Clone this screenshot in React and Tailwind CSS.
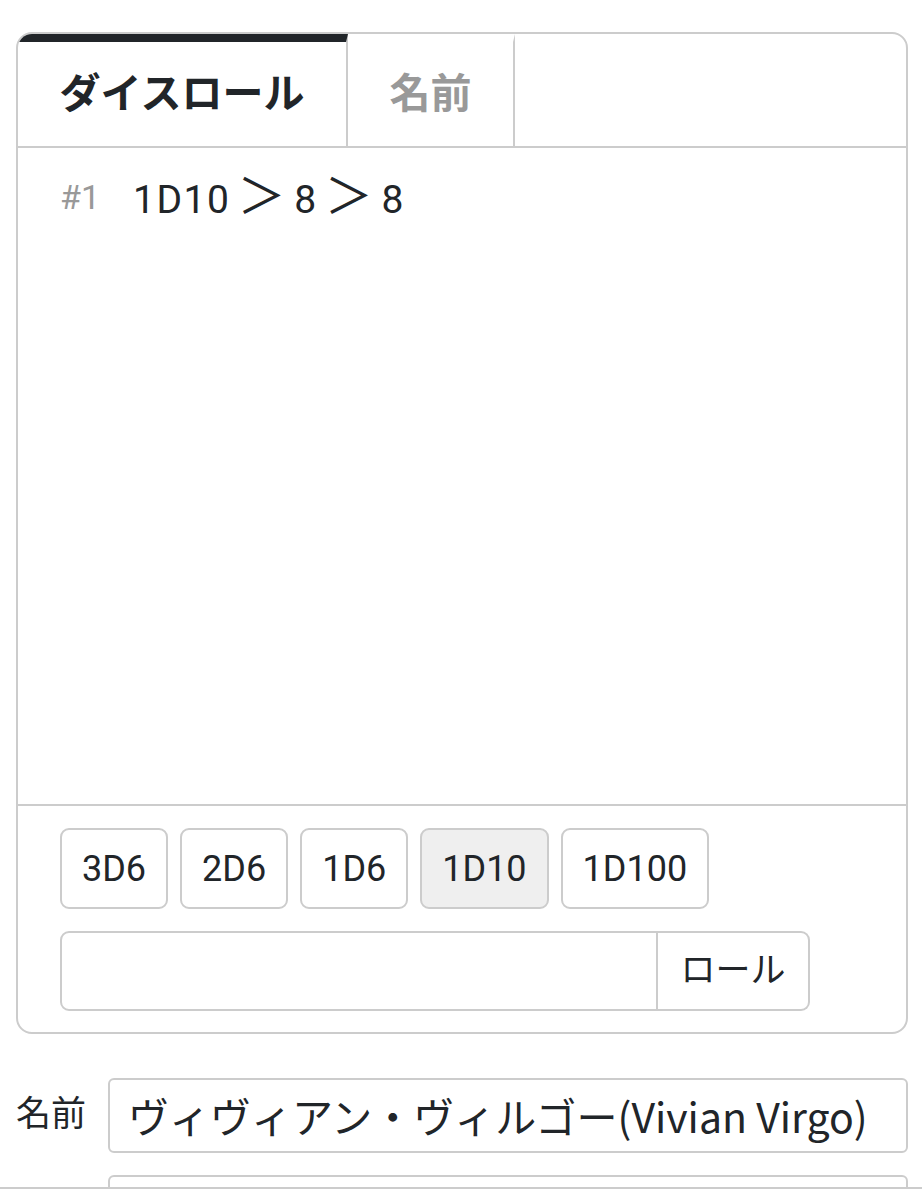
import React from "react";

const font = { fontFamily: 'Roboto, "Noto Sans CJK JP", sans-serif' };

function DiceButton({ label, active }) {
  return (
    <button
      className={`h-[81px] px-[20px] rounded-[9px] border-2 border-[#cccccc] text-[36px] leading-none text-[#212529] ${
        active ? "bg-[#efefef]" : "bg-white"
      }`}
      style={font}
    >
      {label}
    </button>
  );
}

export default function App() {
  return (
    <div className="min-h-[1199px] bg-white text-[#212529]" style={font}>
      <div className="pt-[32px] px-[16px] pr-[14px]">
        <div className="rounded-[16px] border-2 border-[#cccccc] overflow-hidden bg-white">
          {/* Tabs */}
          <div className="flex border-b-2 border-[#cccccc] h-[114px]">
            <div className="w-[330px] border-t-[8px] border-t-[#212529] border-r-2 border-r-[#cccccc] flex items-center justify-center">
              <span className="text-[41px] font-bold leading-none text-[#212529]">ダイスロール</span>
            </div>
            <div className="w-[167px] border-t-[8px] border-t-transparent border-r-2 border-r-[#cccccc] flex items-center justify-center">
              <span className="text-[41px] font-bold leading-none text-[#999999]">名前</span>
            </div>
          </div>
          {/* Log */}
          <div className="h-[658px] border-b-2 border-[#cccccc] pl-[42px] pt-[27px]">
            <div className="flex items-center h-[44px]">
              <span className="text-[34px] text-[#999999] w-[73px]">#1</span>
              <span className="text-[39px] tracking-[1.5px] [word-spacing:-4px] text-[#212529] leading-none whitespace-nowrap">
                1D10 <span className="text-[48px]">＞</span> 8 <span className="text-[48px]">＞</span> 8
              </span>
            </div>
          </div>
          {/* Controls */}
          <div className="pl-[42px] pt-[22px] pb-[21px] flex flex-col gap-[22px]">
            <div className="flex gap-[12px]">
              <DiceButton label="3D6" />
              <DiceButton label="2D6" />
              <DiceButton label="1D6" />
              <DiceButton label="1D10" active />
              <DiceButton label="1D100" />
            </div>
            <div className="flex w-[750px] h-[80px]">
              <div className="flex-1 border-2 border-[#cccccc] rounded-l-[9px]" />
              <button
                className="w-[152px] border-2 border-l-0 border-[#cccccc] rounded-r-[9px] text-[35px] text-[#212529] bg-white"
                style={font}
              >
                ロール
              </button>
            </div>
          </div>
        </div>
      </div>
      {/* Name field */}
      <div className="mt-[44px] px-[16px] pr-[14px] flex flex-col gap-[22px]">
        <div className="flex items-center">
          <span className="w-[92px] text-[35px] text-[#212529]">名前</span>
          <div className="flex-1 h-[75px] border-2 border-[#cccccc] rounded-[6px] flex items-center pl-[18px] overflow-hidden">
            <span
              className="text-[41px] text-[#212529] whitespace-nowrap"
              style={{ fontFamily: '"Noto Sans CJK JP", sans-serif' }}
            >
              ヴィヴィアン・ヴィルゴー(Vivian Virgo)
            </span>
          </div>
        </div>
        <div className="flex">
          <span className="w-[92px]" />
          <div className="flex-1 h-[75px] border-2 border-[#cccccc] rounded-[6px]" />
        </div>
      </div>
      <div className="fixed left-0 right-0 bottom-0 h-[12px] bg-white border-t-2 border-[#cccccc]" />
    </div>
  );
}
